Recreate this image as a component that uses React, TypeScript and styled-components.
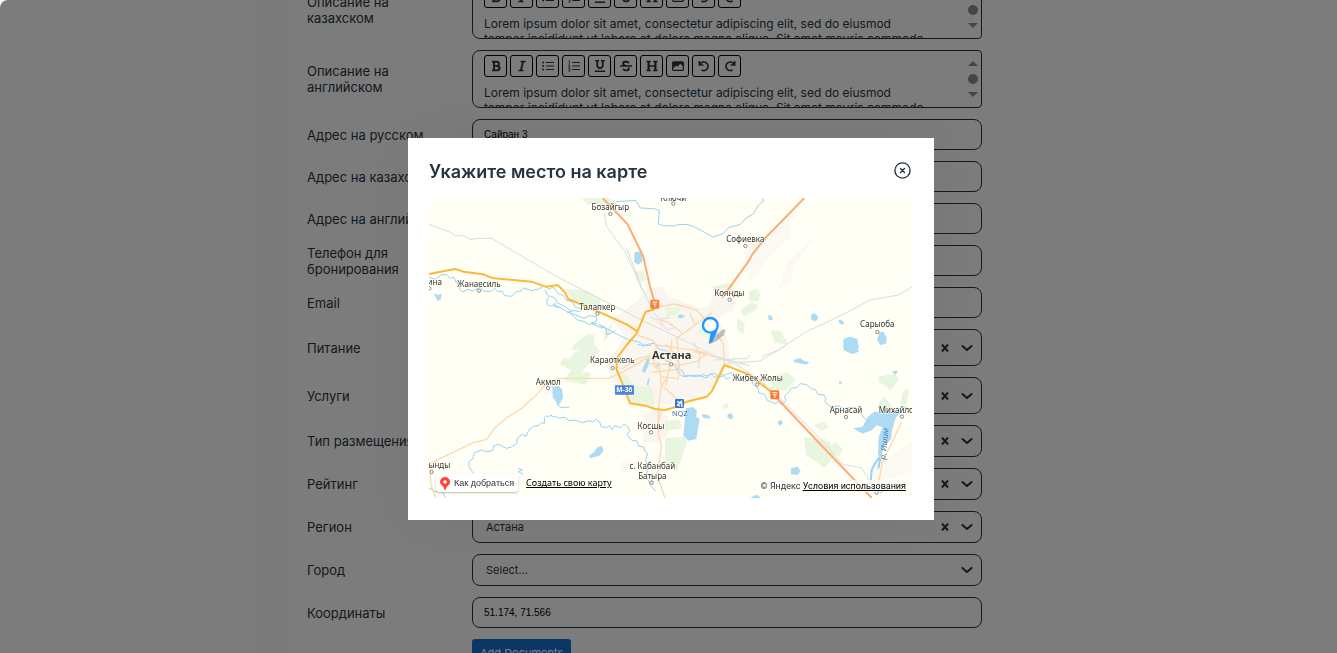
import React from "react";
import styled, { createGlobalStyle } from "styled-components";
import { FaBold, FaItalic, FaUnderline, FaStrikethrough, FaHeading } from "react-icons/fa";

const ink = "#27343f";
const sans = `Inter, "Noto Sans", sans-serif`;

const GlobalStyle = createGlobalStyle`
  * { box-sizing: border-box; }
  body { margin: 0; background: #fff; color: ${ink}; font-family: ${sans}; overflow: hidden; }
  button, input, select { font: inherit; color: inherit; margin: 0; }
`;

const Page = styled.div`
  display: flex;
  height: 100vh;
  overflow: hidden;
  border-top-left-radius: 8px;
  background: #f9f9f9;
`;
const Sidebar = styled.aside`
  flex: 0 0 256px;
`;
const Gutter = styled.div`
  flex: 0 0 32px;
  background: #f6f6f6;
`;
const Content = styled.main`
  flex: 1;
  min-width: 0;
  margin-right: 45px;
  padding: 0 19px;
  border-right: 1px solid #f6f6f6;
`;
const Form = styled.form`
  display: flex;
  flex-direction: column;
  gap: 11px;
  max-width: 675px;
  margin-top: -19px;
`;
const Row = styled.div`
  display: grid;
  grid-template-columns: 145px minmax(0, 1fr);
  column-gap: 20px;
  align-items: center;
`;
const Label = styled.label`
  margin: -2px 0;
  font-size: 13px;
  line-height: 16px;
  font-weight: 400;
`;
const TextInput = styled.input`
  width: 100%;
  height: 31px;
  padding: 0 11px;
  border: 1px solid ${ink};
  border-radius: 8px;
  background: transparent;
  font-family: "Liberation Sans", Arial, sans-serif;
  font-size: 10px;
  color: #000;
`;
const SelectBox = styled.div<{ $tall?: boolean }>`
  display: flex;
  align-items: center;
  gap: 3px;
  height: ${(p) => (p.$tall ? 37 : 32)}px;
  padding-right: 6px;
  border: 1px solid ${ink};
  border-radius: 8px;
`;
const Select = styled.select`
  appearance: none;
  flex: 1;
  min-width: 0;
  padding: 0 13px;
  border: 0;
  background: transparent;
  font-size: 11px;
  line-height: 16px;
`;
const IconButton = styled.button`
  display: grid;
  place-items: center;
  width: 22px;
  height: 22px;
  padding: 0;
  border: 0;
  background: none;
`;
const Chevron = styled.svg`
  width: 16px;
  height: 16px;
`;

const Editor = styled.div`
  display: flex;
  height: 58px;
  overflow: hidden;
  padding: 4px 3px 0 11px;
  border: 1px solid ${ink};
  border-radius: 8px 4px 4px 8px;
`;
const EditorBody = styled.div`
  flex: 1;
  min-width: 0;
`;
const Toolbar = styled.div`
  display: flex;
  gap: 3px;
`;
const ToolButton = styled.button`
  display: grid;
  place-items: center;
  width: 23px;
  height: 22px;
  padding: 0;
  border: 1px solid #000;
  border-radius: 3px;
  background: none;
  svg { width: 12px; height: 12px; }
`;
const EditorText = styled.div`
  margin-top: 8px;
  font-size: 12px;
  line-height: 15px;
  white-space: nowrap;
`;
const ScrollRail = styled.svg`
  flex: 0 0 10px;
  height: 52px;
`;
const AddButton = styled.button`
  grid-column: 2;
  justify-self: start;
  height: 28px;
  padding: 0 8px;
  border: 0;
  border-radius: 3px;
  background: #146ecc;
  color: #fff;
  font-size: 11px;
  line-height: 16px;
`;

const Overlay = styled.div`
  position: fixed;
  inset: 0;
  display: flex;
  align-items: center;
  justify-content: center;
  padding: 5px 0 0 5px;
  border-top-left-radius: 8px;
  background: rgba(0, 0, 0, 0.5);
`;
const Modal = styled.section`
  width: 526px;
  max-width: 100%;
  padding: 20px 22px 22px 21px;
  background: #fff;
  box-shadow: 0 0 60px rgba(0, 0, 0, 0.06);
`;
const ModalHeader = styled.header`
  display: flex;
  align-items: flex-start;
  justify-content: space-between;
  height: 40px;
`;
const ModalTitle = styled.h2`
  margin: 0;
  font-size: 18px;
  line-height: 28px;
  font-weight: 600;
`;
const CloseButton = styled.button`
  display: grid;
  width: 19px;
  height: 24px;
  padding: 0;
  place-items: center;
  border: 0;
  background: none;
`;
const MapFrame = styled.div`
  position: relative;
  height: 300px;
  overflow: hidden;
  background: #fffff6;
`;
const MapSvg = styled.svg`
  display: block;
  width: 100%;
  height: 100%;
  font-family: "Noto Sans", "Open Sans", sans-serif;
`;
const MapActions = styled.div`
  position: absolute;
  left: 7px;
  bottom: 6px;
  display: flex;
  align-items: center;
  gap: 8px;
  font-size: 9px;
  line-height: 12px;
`;
const RouteLink = styled.a`
  display: flex;
  align-items: center;
  gap: 4px;
  height: 18px;
  padding: 0 4px;
  border-radius: 3px;
  background: #fff;
  box-shadow: 0 1px 2px rgba(0, 0, 0, 0.25);
  color: #333;
  font-family: "Liberation Sans", Arial, sans-serif;
  text-decoration: none;
`;
const MapLink = styled.a`
  color: #000;
`;
const CreateLink = styled(MapLink)`
  font-family: "Noto Sans", sans-serif;
`;
const Copyright = styled.div`
  position: absolute;
  right: 4px;
  bottom: 6px;
  padding: 0 2px;
  background: rgba(255, 255, 255, 0.7);
  color: #333;
  font-family: Roboto, sans-serif;
  font-size: 9px;
  line-height: 12px;
`;

const BulletIcon = () => (
  <svg viewBox="0 0 12 12" stroke="currentColor" fill="currentColor">
    <path d="M4 2.5H12M4 6H12M4 9.5H12" strokeWidth="1.1" />
    <g stroke="none"><circle cx="1.2" cy="2.5" r="1" /><circle cx="1.2" cy="6" r="1" /><circle cx="1.2" cy="9.5" r="1" /></g>
  </svg>
);
const NumberIcon = () => (
  <svg viewBox="0 0 12 12" stroke="currentColor" fill="none">
    <path d="M4.2 2.5H12M4.2 6H12M4.2 9.5H12" strokeWidth="1.1" />
    <path d="M.5 1.2h.9v2.6M.3 4.9h1.6v.8L.5 7h1.6M.4 8.2h1.5v3H.4M.8 9.7h1" strokeWidth=".8" />
  </svg>
);
const ImageIcon = () => (
  <svg viewBox="0 0 12 12">
    <rect x=".6" y="1.8" width="10.8" height="8.6" rx="1" fill="none" stroke="currentColor" strokeWidth="1.2" />
    <path d="M1 2h10v4.2L8.2 3.8 5.7 6.6 4.3 5.5 1.3 8.5z" fill="currentColor" />
  </svg>
);
const UndoIcon = ({ flip }: { flip?: boolean }) => (
  <svg viewBox="0 0 12 12" fill="none" stroke="currentColor" strokeWidth="1.6">
    <g transform={flip ? "translate(12 0) scale(-1 1)" : undefined}>
      <path d="M1.3 1v4h4.1M1.8 4.6A4.3 4.3 0 1 1 3.4 9.9" />
    </g>
  </svg>
);

const tools: [string, React.ReactNode][] = [
  ["Жирный", <FaBold />],
  ["Курсив", <FaItalic />],
  ["Маркированный список", <BulletIcon />],
  ["Нумерованный список", <NumberIcon />],
  ["Подчёркнутый", <FaUnderline />],
  ["Зачёркнутый", <FaStrikethrough />],
  ["Заголовок", <FaHeading />],
  ["Изображение", <ImageIcon />],
  ["Отменить", <UndoIcon />],
  ["Повторить", <UndoIcon flip />],
];

const EditorRow = ({ label }: { label: string }) => (
  <Row>
    <Label as="span">{label}</Label>
    <Editor>
      <EditorBody>
        <Toolbar>
          {tools.map(([name, icon]) => (
            <ToolButton key={name} type="button" aria-label={name}>{icon}</ToolButton>
          ))}
        </Toolbar>
        <EditorText>
          Lorem ipsum dolor sit amet, consectetur adipiscing elit, sed do eiusmod<br />
          tempor incididunt ut labore et dolore magna aliqua. Sit amet mauris commodo
        </EditorText>
      </EditorBody>
      <ScrollRail viewBox="0 0 10 52" fill="#8b8b8b" aria-hidden>
        <path d="M0 11L5 6l5 5z" /><circle cx="5" cy="24" r="5" /><path d="M0 37l5 5 5-5z" />
      </ScrollRail>
    </Editor>
  </Row>
);

const InputRow = ({ id, label, value = "" }: { id: string; label: string; value?: string }) => (
  <Row>
    <Label htmlFor={id}>{label}</Label>
    <TextInput id={id} defaultValue={value} />
  </Row>
);

const SelectRow = ({ id, label, value = "", tall, clearable = true }: {
  id: string; label: string; value?: string; tall?: boolean; clearable?: boolean;
}) => (
  <Row>
    <Label htmlFor={id}>{label}</Label>
    <SelectBox $tall={tall}>
      <Select id={id}><option>{value}</option></Select>
      {clearable && (
        <IconButton type="button" aria-label="Очистить">
          <svg width="8" height="8" viewBox="0 0 8 8" fill="none" stroke="currentColor" strokeWidth="2">
            <path d="M1 .5l6 7M7 .5l-6 7" />
          </svg>
        </IconButton>
      )}
      <Chevron viewBox="0 0 16 16" fill="none" stroke="currentColor" strokeWidth="2" strokeLinecap="round" strokeLinejoin="round">
        <path d="M3.400 6L8 10l4.600-4" />
      </Chevron>
    </SelectBox>
  </Row>
);

const towns: [number, number, string][] = [
  [544, 37, "Бозайгыр"], [733, 9, "Ключи"], [949, 132, "Софиевка"], [901, 293, "Коянды"],
  [17, 260, "ина"], [150, 268, "Жанаесиль"], [505, 336, "Талапкер"], [550, 496, "Караоткель"],
  [358, 560, "Акмол"], [1345, 388, "Сарыоба"], [986, 549, "Жибек Жолы"], [1251, 645, "Арнасай"],
  [1402, 645, "Михайло"], [666, 692, "Косшы"], [31, 811, "ынды"], [670, 814, "с. Кабанбай"], [670, 842, "Батыра"],
];
const dots: [number, number][] = [
  [544, 48], [733, 17], [949, 144], [902, 305], [1, 271], [150, 278], [505, 347], [551, 510],
  [357, 570], [1345, 402], [985, 559], [1251, 657], [1419, 656], [666, 703], [8, 822], [668, 854], [1343, 884], [727, 499],
];

/* City map; one unit is a third of a pixel. Tiles are shifted to their place on the sheet. */
const NW = "translate(-12 -9)";
const NE = "translate(708 -9)";
const SW = "translate(-12 441)";
const SE = "translate(708 441)";
const CENTER = "translate(513 261)";

const CityMap = () => (
  <MapSvg viewBox="0 0 1449 900" fill="none" strokeLinejoin="round" role="img" aria-label="Карта Астаны">
    <g fill="#f9f6f0">
      <path transform={CENTER} d="M115 45l25-35 45-5 20 30 95 35 30-10 10-40 50-25 20 20-10 50-45 35 30 75 5 65-60 85-90 35-140-5-55-35-25-80 55-90-40-45z" />
      <path transform={SW} d="M655 205l45-10 30 20-5 60-30 20-40-5z" />
      <path transform={NE} d="M235 150l55-20 85-80 1 75-60 55-60 80-10-30zM285 320l60-50 20-65 40-40 65-60-80 100-15 60-60 30zM150 330l65-10-10 30-50 20z" opacity=".6" />
      <path transform={SW} d="M350 120l40-5 5 30-35 5zM590 350l50-5-10 25-45 10z" opacity=".6" />
      <path transform={SE} d="M165 40h85l-10 30-60-5zM600 370l80-40 60-40v90l-100 30z" opacity=".6" />
    </g>
    <g fill="#e8f6df">
      <path transform={NW} d="M472 9h80l30 20-50 10-20-14-25 4zM630 228l25 1 10 22-17 11-16-8zM420 282l62 3 45 28-8 32-62-14zM438 465l10-17 40-30 20 2-2 30-14 15z" />
      <path transform={SW} d="M445 25l45-25h22l13 18-55 62 28 5-15 35-25-5-43-7 24-33-34-16 8-19 20 3z" />
      <path transform={CENTER} d="M40 110l-25 30-5 30 15-15zM52 252l28 20 20 30 55 5 12 65-75-18z" />
      <path transform={NE} d="M140 275l50-10 25 8-65 13zM252 289l24-8 10 15-5 22-28 1zM227 345l30-22 22 5-5 18-40 18zM216 369l23 15-3 34-20-14zM317 406l30 1 24 42-42-6zM95 412l30-27 15 12-20 26zM0 338l50-5-10 22-35 10z" />
      <path transform={SE} d="M322 95l45-15 25 25-30 32-45-5zM642 94l50-8 10 18-25 32-36-27zM417 276l74 12 22 40-35 40-55-38zM447 240l30-10 15 16-25 13zM492 309l18-20 25 25-15 22-28-20zM642 174l15-22 25 35-20 12-25-10zM717 134l15-2-8 50-20-5zM0 228l45-3 5 25-50 8zM0 280l60-5 6 15-30 90-36-25zM175 178l15-5v15l-15 3z" />
    </g>
    <g fill="#addbf4">
      <path d="M617 162l20-2 4 28-13 12-13-9zM14 285l12 6 12-4-3 18-10 3zM370 567l20-4 9 12 3 25-13 22-18-24zM480 773l15-10 10-15 14-4 4 14-12 15-27 8z" />
      <path transform={NE} d="M310 360l8 1 6 10-6 6-8-4zM438 360l10-6 11 10-2 12-10 3-9-8zM520 376l10-1 8 9-4 5-11-4zM535 432l20-7 22 7 4 25-5 10h-40zM643 412l12-2 11 20-4 16-16 4-10-14zM38 363l10-6 13 8-12 5-10-1z" />
      <path transform={SE} d="M533 0h40l9 20-20 7-20-8zM385 45l20-6 13 9 15 3-8 8-22-4-15-3zM681 79l14-2 4 5-9 7zM522 110l6-2 3 6-4 4-5-3zM63 190l20-4 12 10-1 20 10 6-10 60-25 5-14-16zM110 207l20 3 8 11-24-3zM190 207l10-3 5 15-10 5-9-10zM340 228l10-3 4 10-10 7-6-7zM378 370l20-5 9 13-10 12-19-2zM265 453l12-4 10 10h-30z" />
      <path transform={SE} d="M565 250l28-5 15-29 22-17 18 6 12-14 15 13 25-12 27-9-35 35-10 35-4 30-22 22-7 30-10-5 2-55 12-28-18-6-15 15-28 10z" />
      <path transform={CENTER} d="M140 222l9-4-2 20-13 27-9-6zM172 232l7 2-6 14-4-4zM145 280l5-3-5 25-5-3z" />
    </g>
    <g stroke="#9bd2f2" strokeWidth="3">
      <path transform={NW} d="M12 247l18 6 20-14 15-1 10 12 12-3 8 18 12 2-3 16 10 8 14-8 17 5 20-12 10 12 22 2 12-10 10 10 12-2 8 14 20 2 12-12 17-4 8-9 23 8 22-5 16-9 15 9 12-6 16 20 16 6 8 14 18 4 8 16 21 6-7 8-20-4-18 8M360 284l5 14 8 5-8 12 2 14 12 5 8-6 18 10 22 12 50 20 15-8 22 3 0 14-15 5 30 15 10-6M375 302l15 8 8 14 24 12 18 14M392 322l-6 12 20 4M430 350l28 25 22 5 10 8 25-3M525 390l18 12 2 18 14-6 12-8M520 388l90 47 30 5 15 10 25 1" />
      <path transform={CENTER} d="M112 178l20 5 15-6 16-2 15 18 20 3 15 16 15 5 10 22-5 12 15 6 5 17 16-4 12 5 15-2 14-4 12 4 18-9 15 8 10-4 14 14 8-4 5 4" />
      <path transform={SE} d="M0 45l30 15 10 25 15 10 20-2 20-3 30 9 12-14 12 12 20-3 30-12 10 18 12-3 18 14 20-14 5 22 15 10 2 14 18 5 8 18 24 10 10-5 10 9 12-13-4-14 12-12 8-12 16-1 12-12 18 3 14 12 12 3 8 14 18 2 6 12-5 8 22 16 20-4 15 9 35-5 14 14 14 20 20 14" />
      <path d="M560 11l60-4 14 23 43 2 14 6-3 40 15 5 34 1 10-5 28 1 18 5 60 32 28-10 18-18 35-10 16-18 24-14 14-26 15-10-2-10" />
      <path transform={SW} d="M145 385l-13-20 0-16 12-8 3-16 20-10 18 5 18-3 3-15 14-4 25 12 14-4 16-10 2-16 14-12 12 6 8-18 14-12 15-2 10-10 8 4 0-18 6-6 6 4 8-6 4 6 8-3 10 6 20-2 12 10 18-2 22 8 20-6 12 4 8-8 12 8 4 14 16 2 10-5 8 12 8-12 16 6 10-10 12 6 6 14-8 10 14 18 16 2 6 16 14 2 4 14 8 6-6 20 6 22-4 25 14 30 14 15M0 440l15-10 14 10 20-4 12 22M105 435l6-25-10 8M280 370l12 5-12 5 14 8" />
      <path transform={SW} d="M395 175l10 12 28 0" />
      <path transform={SE} d="M645 335l-15 20-10 20-3 35 5 20 30 12M640 370l6-30" strokeWidth="6" />
    </g>
    <g stroke="#dcdcdc" strokeWidth="3">
      <path transform={NW} d="M12 88l62 23 18 11h24l20 12 22-4h42l195 115 265 135" />
      <path transform={CENTER} d="M135 110l125 60 90 45 100 28M345 215l45 15 15-12M80-110l42 110 38 80 30 40M150 95l20 10 40-8M345 225l95-5 10-10M170 110l35 25 15-5M280 170l20 40-5 40" />
      <path transform={SE} d="M210 55l100 70 170 170 50 62 60 12 18 28 12 40M185 55l100-7 80-48" />
      <path transform={NE} d="M290 485l50-20 80-53 75-35 45-22 75-40 85-15 42-25" />
      <path transform={NW} d="M538 55l7 40 55 75 32 68 20 50" />
    </g>
    <g stroke="#fdd9b0" strokeWidth="4">
      <path transform={SW} d="M15 355l130-62 40-10 25-35 35-30 45-28 40-36 25-28 45-26h150l30-12 70-38M15 370l3 50 15 40" />
      <path transform={CENTER} d="M180 65l45-8 65 18 40 45 40 55 3 65M178 105l27 7 45 35M335 83l-15 12-90 65 8 60M110 150l45 15 15 15 70 10 40 5 40 10-30 25-50 10-95-5M170 180l-5 25-5 35 20 20M195 178l15 10v50l-5 25-8 40M215 165v30l20 30 5 35-8 25M155 262l70-8 15 10M180 275l50 5M180 240l3 60 67 58M185 375l-10 35-3 25M205 270l-22 35-8 70M270 85l15 35-20 15M150 212l-40 10-45 30M345 215l-65-15" />
      <path transform={SE} d="M710 230l-28 60-30 60-12 70-8 20" />
      <path transform={SW} d="M700 180v90l10 30-12 80-20 30M700 400l20 60M645 50l45-20" />
    </g>
    <path d="M521 0l75 79 47 97 20 90 15 50M1126 0l-118 121-38 48-12 22-78 108M1035 591l110 117 183 192" stroke="#fdac72" strokeWidth="6" />
    <path d="M0 228l78-15 25 8 60 8 30 12 115 10 42 15 36-5 22 22 10 20 90 38 85 38 33 22M678 333l-28 8-27 65-30 35-30 40v35l15 35 25 65 45 7 30 10 30 3 45-13 20-12 60-15 15-15 38-80 27 10 50 20 75 60" stroke="#ffb737" strokeWidth="6" />
    <g fill="#ff7c36"><rect x="664" y="305" width="27" height="27" rx="4" /><rect x="1024" y="577" width="27" height="27" rx="4" /></g>
    <path d="M670 312h15M672 318h11M677.500 318v9M1030 584h15M1032 590h11M1037.500 590v9" stroke="#fff" strokeWidth="3" />
    <rect x="558" y="562" width="57" height="28" rx="3" fill="#4c83df" />
    <text x="586" y="583" textAnchor="middle" fontSize="20" fontWeight="700" fill="#fff">М-36</text>
    <rect x="738" y="603" width="27" height="27" rx="4" fill="#3572dc" />
    <path d="M759 608l-15 15M744 611l14 4 1 12M746 619l7 6" stroke="#fff" strokeWidth="4" />
    <text x="752" y="655" textAnchor="middle" fontSize="22" fill="#3865b5">NQZ</text>
    <g fontSize="24" fill="#333" stroke="#fffff6" strokeWidth="3" paintOrder="stroke" textAnchor="middle">
      {towns.map(([x, y, name]) => <text key={name} x={x} y={y}>{name}</text>)}
      <text x="728" y="483" fontSize="33" fontWeight="700">Астана</text>
    </g>
    <text transform="translate(1369 785) rotate(-84)" fontSize="24" fontStyle="italic" fill="#4275b5">р. Ишим</text>
    <g fill="#fff" stroke="#555" strokeWidth="2">
      {dots.map(([x, y]) => <circle key={`${x}-${y}`} cx={x} cy={y} r="5" />)}
    </g>
    <path d="M842 438l12-22 28-22 8 2-6 16-22 18z" fill="#555" opacity=".35" />
    <path d="M839 438l6-34 21-8-16 35z" fill="#1e98ff" />
    <circle cx="844" cy="382" r="22" fill="#fff" stroke="#1e98ff" strokeWidth="7" />
  </MapSvg>
);

export default function App() {
  return (
    <>
      <GlobalStyle />
      <Page>
        <Sidebar />
        <Gutter />
        <Content>
          <Form>
            <EditorRow label="Описание на казахском" />
            <EditorRow label="Описание на английском" />
            <InputRow id="addr-ru" label="Адрес на русском" value="Сайран 3" />
            <InputRow id="addr-kz" label="Адрес на казахском" />
            <InputRow id="addr-en" label="Адрес на английском" />
            <InputRow id="phone" label="Телефон для бронирования" />
            <InputRow id="email" label="Email" />
            <SelectRow id="food" label="Питание" tall />
            <SelectRow id="services" label="Услуги" tall />
            <SelectRow id="type" label="Тип размещения" />
            <SelectRow id="rating" label="Рейтинг" />
            <SelectRow id="region" label="Регион" value="Астана" />
            <SelectRow id="city" label="Город" value="Select..." clearable={false} />
            <InputRow id="coords" label="Координаты" value="51.174, 71.566" />
            <Row><AddButton type="button">Add Documents</AddButton></Row>
          </Form>
        </Content>
      </Page>
      <Overlay>
        <Modal role="dialog" aria-modal="true" aria-labelledby="map-title">
          <ModalHeader>
            <ModalTitle id="map-title">Укажите место на карте</ModalTitle>
            <CloseButton type="button" aria-label="Закрыть">
              <svg width="17" height="17" viewBox="0 0 17 17" fill="none" stroke="currentColor" strokeWidth="1.4" strokeLinecap="round">
                <circle cx="8.500" cy="8.500" r="7.600" /><path d="M6.500 6.500l4 4M10.500 6.500l-4 4" />
              </svg>
            </CloseButton>
          </ModalHeader>
          <MapFrame>
            <CityMap />
            <MapActions>
              <RouteLink href="#route">
                <svg width="10" height="13" viewBox="0 0 10 13">
                  <path d="M5 0a5 5 0 0 1 5 5c0 3-3.500 3.600-4.500 8h-1C4 8.600 0 8 0 5a5 5 0 0 1 5-5z" fill="#f43" />
                  <circle cx="5" cy="5" r="1.800" fill="#fff" />
                </svg>
                Как добраться
              </RouteLink>
              <CreateLink href="#create">Создать свою карту</CreateLink>
            </MapActions>
            <Copyright>© Яндекс <MapLink href="#terms">Условия использования</MapLink></Copyright>
          </MapFrame>
        </Modal>
      </Overlay>
    </>
  );
}
